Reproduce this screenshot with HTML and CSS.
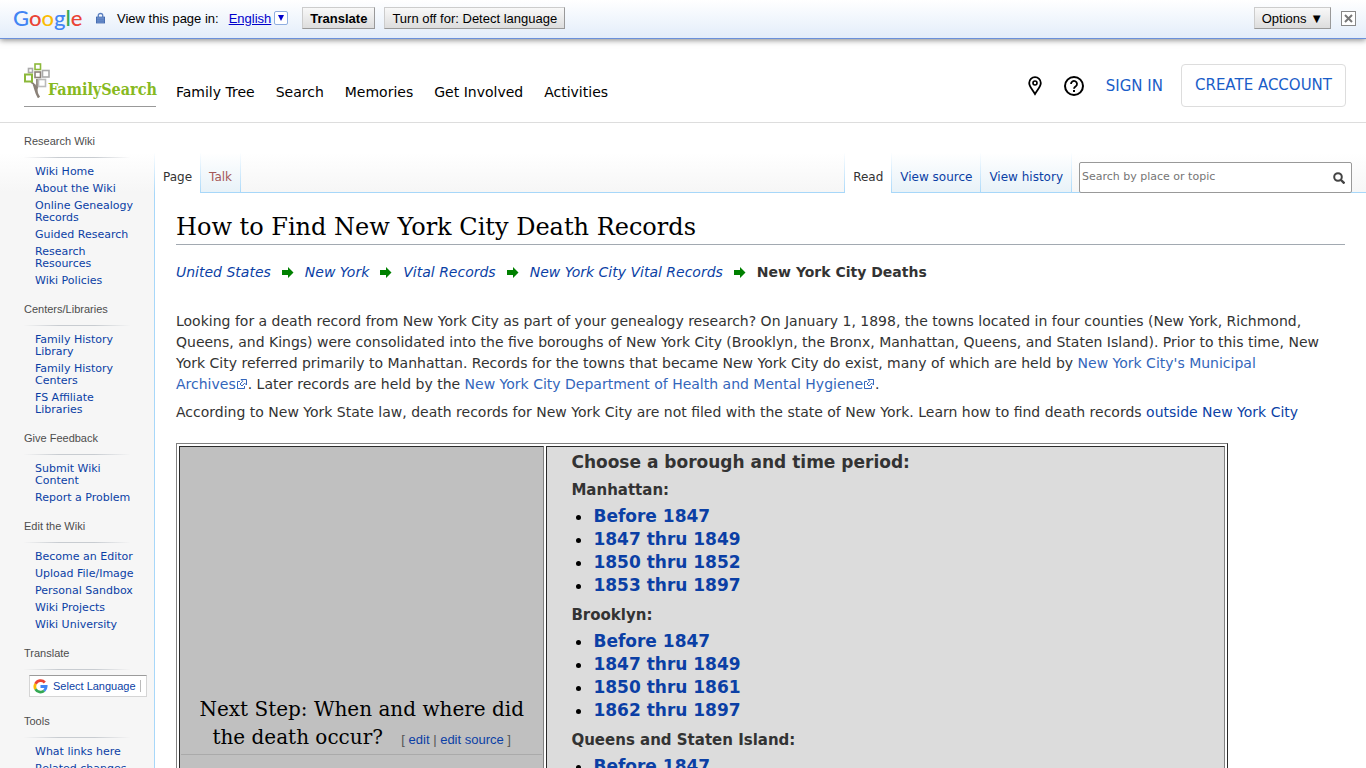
FILE: index.html
```html
<!DOCTYPE html>
<html lang="en">
<head>
    <meta charset="UTF-8">
    <meta name="viewport" content="width=device-width, initial-scale=1.0">
    <title>How to Find New York City Death Records</title>
    <link rel="stylesheet" href="styles.css">
</head>
<body>
    <!-- shared icons -->
    <svg class="defs" aria-hidden="true">
        <symbol id="arrow" viewBox="0 0 12 12">
            <path d="M0 3h6V0L11.5 5.500 6 11V8H0z" fill="#008000"/>
        </symbol>
        <symbol id="external" viewBox="0 0 12 12">
            <path d="M4 3.5H1.5v7h7V8" fill="none" stroke="#36b" stroke-width="1"/>
            <path d="M5 1.5h5.5V7L8.7 5.2 6 8 4 6l2.8-2.7z" fill="#fff" stroke="#36b" stroke-width="1"/>
        </symbol>
    </svg>

    <div class="translate-bar">
        <div class="google"><span class="g-blue">G</span><span class="g-red">o</span><span class="g-yellow">o</span><span class="g-blue">g</span><span class="g-green">l</span><span class="g-red">e</span></div>
        <svg class="lock" viewBox="0 0 10 12">
            <path d="M2.5 5V3.2a2.5 2.2 0 0 1 5 0V5" fill="none" stroke="#5a7fc0" stroke-width="1.4"/>
            <rect x="0.5" y="5" width="9" height="6.5" fill="#7d9fd8" stroke="#3f66ad"/>
            <path d="M1 7.2h8M1 9.4h8" stroke="#3f66ad"/>
        </svg>
        <span class="view-in">View this page in:</span>
        <a class="language" href="#">English</a>
        <button class="language-arrow" aria-label="Choose language"><svg viewBox="0 0 6 6"><path d="M0 0h6L3 6z" fill="#00c"/></svg></button>
        <button class="bar-button translate"><b>Translate</b></button>
        <button class="bar-button">Turn off for: Detect language</button>
        <button class="bar-button options">Options ▼</button>
        <button class="close" aria-label="Close"><svg viewBox="0 0 15 15"><rect x="0.5" y="0.5" width="14" height="14" fill="#fff" stroke="#888"/><path d="M4 4l7 7M11 4l-7 7" stroke="#777" stroke-width="2"/></svg></button>
    </div>

    <header class="header">
        <a class="logo" href="#">
            <svg viewBox="0 0 27 35">
                <g fill="none" stroke-width="1.6">
                    <path d="M15 34.500C12 30.500 11.500 25 10 21.500" stroke="#8a8178" stroke-width="2.600"/>
                    <path d="M12.500 29c0-6 2-8 4-9.500M13 25V16M7 19c3 2 5 4 5.500 8" stroke="#8a8178" stroke-width="1.800"/>
                    <rect x="11" y="1" width="5.500" height="5.500" stroke="#8cb83a"/>
                    <rect x="4.500" y="5.500" width="4" height="4" stroke="#aaa"/>
                    <rect x="11" y="9" width="5.500" height="5.500" stroke="#8a8178"/>
                    <rect x="18.500" y="7.500" width="6.500" height="6.500" stroke="#aaa"/>
                    <rect x="1" y="11.500" width="7" height="7" stroke="#8cb83a" stroke-width="2"/>
                    <rect x="14.500" y="16.500" width="7" height="7" fill="#fff" stroke="#bbb"/>
                </g>
            </svg>
            <span>FamilySearch</span>
        </a>
        <nav class="main-nav">
            <a href="#">Family Tree</a>
            <a href="#">Search</a>
            <a href="#">Memories</a>
            <a href="#">Get Involved</a>
            <a href="#">Activities</a>
        </nav>
        <div class="account">
            <a class="pin" href="#" aria-label="Locations"><svg viewBox="0 0 14 20"><path d="M7 18C4.500 13.500 1.200 10.500 1.200 6.900a5.800 5.800 0 0 1 11.600 0C12.800 10.500 9.500 13.500 7 18z" fill="none" stroke="#000" stroke-width="1.800"/><circle cx="7" cy="7" r="2" fill="none" stroke="#000" stroke-width="1.600"/></svg></a>
            <a class="help" href="#" aria-label="Help"><svg viewBox="0 0 20 20"><circle cx="10" cy="10" r="9" fill="none" stroke="#000" stroke-width="2"/><path d="M7 8a3 3 0 1 1 4.800 2.300C10.600 11.100 10 11.600 10 12.800" fill="none" stroke="#000" stroke-width="1.800"/><rect x="9" y="14" width="2" height="2"/></svg></a>
            <a class="sign-in" href="#">SIGN IN</a>
            <a class="create" href="#">CREATE ACCOUNT</a>
        </div>
    </header>

    <div class="wiki">
        <aside class="sidebar">
            <section>
                <h3>Research Wiki</h3>
                <ul>
                    <li><a href="#">Wiki Home</a></li>
                    <li><a href="#">About the Wiki</a></li>
                    <li><a href="#">Online Genealogy Records</a></li>
                    <li><a href="#">Guided Research</a></li>
                    <li><a href="#">Research Resources</a></li>
                    <li><a href="#">Wiki Policies</a></li>
                </ul>
            </section>
            <section>
                <h3>Centers/Libraries</h3>
                <ul>
                    <li><a href="#">Family History Library</a></li>
                    <li><a href="#">Family History Centers</a></li>
                    <li><a href="#">FS Affiliate Libraries</a></li>
                </ul>
            </section>
            <section>
                <h3>Give Feedback</h3>
                <ul>
                    <li><a href="#">Submit Wiki Content</a></li>
                    <li><a href="#">Report a Problem</a></li>
                </ul>
            </section>
            <section>
                <h3>Edit the Wiki</h3>
                <ul>
                    <li><a href="#">Become an Editor</a></li>
                    <li><a href="#">Upload File/Image</a></li>
                    <li><a href="#">Personal Sandbox</a></li>
                    <li><a href="#">Wiki Projects</a></li>
                    <li><a href="#">Wiki University</a></li>
                </ul>
            </section>
            <section>
                <h3>Translate</h3>
                <a class="gadget" href="#">
                    <svg viewBox="0 0 16 16" fill="none" stroke-width="3">
                        <path d="M12.600 3.700A6 6 0 0 0 2.700 5.200" stroke="#ea4335"/>
                        <path d="M2.700 5.200a6 6 0 0 0 0 5.600" stroke="#fbbc05"/>
                        <path d="M2.700 10.800a6 6 0 0 0 9.200 1.700" stroke="#34a853"/>
                        <path d="M11.900 12.500A6 6 0 0 0 14 8H8" stroke="#4285f4"/>
                    </svg>
                    <span>Select Language</span>
                </a>
            </section>
            <section>
                <h3>Tools</h3>
                <ul>
                    <li><a href="#">What links here</a></li>
                    <li><a href="#">Related changes</a></li>
                </ul>
            </section>
        </aside>

        <div class="main">
            <div class="tab-row">
                <nav class="tabs">
                    <a class="selected" href="#">Page</a>
                    <a class="new" href="#">Talk</a>
                </nav>
                <nav class="tabs views">
                    <a class="selected" href="#">Read</a>
                    <a href="#">View source</a>
                    <a href="#">View history</a>
                </nav>
                <form class="search">
                    <input type="text" placeholder="Search by place or topic" aria-label="Search by place or topic">
                    <button type="button" aria-label="Search"><svg viewBox="0 0 12 12"><circle cx="5" cy="5" r="3.800" fill="none" stroke="#444" stroke-width="2"/><path d="M8 8l3.500 3.500" stroke="#444" stroke-width="2.400"/></svg></button>
                </form>
            </div>

            <main class="content">
                <h1>How to Find New York City Death Records</h1>
                <div class="breadcrumbs">
                    <a href="#">United States</a>
                    <svg><use href="#arrow"/></svg>
                    <a href="#">New York</a>
                    <svg><use href="#arrow"/></svg>
                    <a href="#">Vital Records</a>
                    <svg><use href="#arrow"/></svg>
                    <a href="#">New York City Vital Records</a>
                    <svg><use href="#arrow"/></svg>
                    <b>New York City Deaths</b>
                </div>
                <p>Looking for a death record from New York City as part of your genealogy research? On January 1, 1898, the towns located in four counties (New York, Richmond, Queens, and Kings) were consolidated into the five boroughs of New York City (Brooklyn, the Bronx, Manhattan, Queens, and Staten Island). Prior to this time, New York City referred primarily to Manhattan. Records for the towns that became New York City do exist, many of which are held by <a class="external" href="#">New York City's Municipal <span>Archives<svg><use href="#external"/></svg></span></a>. Later records are held by the <a class="external" href="#">New York City Department of Health and Mental <span>Hygiene<svg><use href="#external"/></svg></span></a>.</p>
                <p>According to New York State law, death records for New York City are not filed with the state of New York. Learn how to find death records <a href="#">outside New York City</a></p>

                <table class="steps">
                    <tr>
                        <td class="step">
                            <h2>Next Step: When and where did the death occur? <span class="edit">[ <a href="#">edit</a> | <a href="#">edit source</a> ]</span></h2>
                        </td>
                        <td class="choices">
                            <h3>Choose a borough and time period:</h3>
                            <h4>Manhattan:</h4>
                            <ul>
                                <li><a href="#">Before 1847</a></li>
                                <li><a href="#">1847 thru 1849</a></li>
                                <li><a href="#">1850 thru 1852</a></li>
                                <li><a href="#">1853 thru 1897</a></li>
                            </ul>
                            <h4>Brooklyn:</h4>
                            <ul>
                                <li><a href="#">Before 1847</a></li>
                                <li><a href="#">1847 thru 1849</a></li>
                                <li><a href="#">1850 thru 1861</a></li>
                                <li><a href="#">1862 thru 1897</a></li>
                            </ul>
                            <h4>Queens and Staten Island:</h4>
                            <ul>
                                <li><a href="#">Before 1847</a></li>
                            </ul>
                        </td>
                    </tr>
                </table>
            </main>
        </div>
    </div>
</body>
</html>
```
FILE: styles.css
```css
body {
    margin: 0;
    height: 100vh;
    overflow: hidden;
    display: flex;
    flex-direction: column;
    font-family: "DejaVu Sans", Verdana, sans-serif;
    font-size: 14px;
    color: #333;
    background: #fff;
}

a {
    color: #0b3fa5;
    text-decoration: none;
}

h1, h2, h3, h4, ul, p {
    margin: 0;
    padding: 0;
    font-weight: normal;
}

svg {
    display: block;
}

.defs {
    position: absolute;
    width: 0;
    height: 0;
}

/* translate bar */
.translate-bar {
    display: flex;
    flex-shrink: 0;
    align-items: center;
    box-sizing: border-box;
    height: 39px;
    padding: 0 10px 2px 13px;
    font-family: "Liberation Sans", Arial, sans-serif;
    font-size: 13px;
    color: #000;
    background: linear-gradient(#fff, #e3edfa);
    border-bottom: 1px solid #6b90da;
    box-shadow: 0 1px 6px rgba(0, 0, 0, 0.5);
}

.google {
    width: 68px;
    margin-right: 15px;
    font-family: Lato, sans-serif;
    font-size: 22px;
    font-weight: 500;
    line-height: 28px;
}

.g-blue { color: #4285f4; }
.g-red { color: #ea4335; }
.g-yellow { color: #fbbc05; }
.g-green { color: #34a853; }

.lock {
    width: 9px;
    height: 12px;
    margin-right: 12px;
}

.language {
    margin: 0 3px 0 10px;
    color: #00c;
    text-decoration: underline;
}

.language-arrow {
    display: flex;
    align-items: center;
    justify-content: center;
    width: 14px;
    height: 14px;
    padding: 0;
    background: #fff;
    border: 1px solid #8faee0;
    border-radius: 2px;
}

.language-arrow svg {
    width: 6px;
    height: 6px;
}

.bar-button {
    height: 22px;
    margin-right: 9px;
    padding: 0 7px;
    font-family: inherit;
    font-size: 13px;
    color: #000;
    background: linear-gradient(#f8f8f8, #ddd);
    border: 1px solid;
    border-color: #ccc #999 #999 #ccc;
}

.translate {
    margin-left: 14px;
}

.options {
    margin-left: auto;
    margin-right: 10px;
}

.close {
    padding: 0;
    background: none;
    border: none;
}

.close svg {
    width: 15px;
    height: 15px;
}

/* site header */
.header {
    display: flex;
    flex-shrink: 0;
    align-items: center;
    box-sizing: border-box;
    height: 84px;
    padding: 0 20px 0 24px;
    border-bottom: 1px solid #ddd;
}

.logo {
    display: flex;
    align-items: flex-end;
    box-sizing: border-box;
    width: 132px;
    height: 43px;
    margin-top: 10px;
    padding-bottom: 8px;
    border-bottom: 1px solid #999;
}

.logo svg {
    flex-shrink: 0;
    width: 27px;
    height: 35px;
}

.logo span {
    margin-left: -3px;
    font-family: "DejaVu Serif Condensed", "DejaVu Serif", serif;
    font-size: 16px;
    font-weight: bold;
    line-height: 16px;
    color: #87b921;
}

.main-nav {
    display: flex;
    gap: 21px;
    margin: 22px 0 0 20px;
}

.main-nav a {
    color: #000;
}

.account {
    display: flex;
    align-items: center;
    margin: 10px 0 0 auto;
    font-size: 15px;
}

.pin svg {
    width: 14px;
    height: 20px;
}

.help svg {
    width: 20px;
    height: 20px;
    margin: 0 22px;
}

.sign-in {
    color: #1a5dc8;
}

.create {
    margin-left: 18px;
    padding: 12px 13px;
    line-height: 17px;
    color: #1a5dc8;
    border: 1px solid #ddd;
    border-radius: 4px;
}

/* wiki layout */
.wiki {
    display: flex;
    flex: 1;
    min-height: 0;
    background: linear-gradient(#fff 30px, #f6f6f6 69px);
}

.sidebar {
    flex-shrink: 0;
    box-sizing: border-box;
    width: 154px;
    padding: 10px 0 0 24px;
    font-size: 11px;
}

.sidebar section {
    margin-bottom: 9px;
}

.sidebar h3 {
    width: 106px;
    padding-bottom: 8px;
    font-family: "Liberation Sans", Arial, sans-serif;
    font-size: 11px;
    line-height: 16px;
    color: #4d4d4d;
    border-bottom: 1px solid;
    border-image: linear-gradient(to right, transparent, #c8ccd1 33%, #c8ccd1 66%, transparent) 1;
}

.sidebar ul {
    width: 102px;
    padding: 8px 0 0 11px;
    list-style: none;
}

.sidebar li {
    padding-bottom: 5px;
    line-height: 12px;
}

.gadget {
    display: flex;
    align-items: center;
    gap: 5px;
    box-sizing: border-box;
    width: 118px;
    height: 22px;
    margin: 5px 0 16px 5px;
    padding-left: 3px;
    font-family: "Liberation Sans", Arial, sans-serif;
    background: #fff;
    border: 1px solid #d5d5d5;
    border-top-color: #9b9b9b;
}

.gadget svg {
    width: 15px;
    height: 15px;
}

.gadget span {
    padding-right: 4px;
    border-right: 1px solid #bbb;
}

.main {
    display: flex;
    flex: 1;
    flex-direction: column;
    min-width: 0;
}

.tab-row {
    display: flex;
    flex-shrink: 0;
    align-items: flex-end;
    height: 70px;
    padding-right: 14px;
    background: linear-gradient(#a7d7f9, #a7d7f9) bottom / 100% 1px no-repeat;
}

.tabs {
    display: flex;
    font-size: 12px;
}

.tabs a {
    height: 23px;
    padding: 17px 8px 0;
    border-right: 1px solid;
    border-image: linear-gradient(#fff, #a7d7f9) 1;
    background: linear-gradient(#fff, #e8f2f8);
    background-size: 100% 39px;
    background-repeat: no-repeat;
}

.tabs a:first-child {
    border-left: 1px solid;
}

.tabs .selected {
    color: #333;
    background: #fff;
}

.tabs .new {
    color: #a55858;
}

.views {
    margin-left: auto;
}

.search {
    display: flex;
    align-items: center;
    box-sizing: border-box;
    width: 20%;
    min-width: 273px;
    height: 31px;
    margin-left: 7px;
    background: #fff;
    border: 1px solid #999;
    border-radius: 2px;
}

.search input {
    flex: 1;
    min-width: 0;
    padding: 0 2px 2px;
    font-family: inherit;
    font-size: 11px;
    background: none;
    border: none;
}

.search input::placeholder {
    color: #757575;
}

.search button {
    padding: 0 6px;
    background: none;
    border: none;
}

.search svg {
    width: 12px;
    height: 12px;
}

/* article */
.content {
    flex: 1;
    padding: 18px 21px 0;
    background: #fff;
    border-left: 1px solid #a7d7f9;
}

.content h1 {
    margin-bottom: 17px;
    font-family: "DejaVu Serif", serif;
    font-size: 24px;
    line-height: 33px;
    color: #000;
    border-bottom: 1px solid #a2a9b1;
}

.breadcrumbs {
    display: flex;
    align-items: center;
    gap: 11px;
    margin-bottom: 28px;
    line-height: 21px;
}

.breadcrumbs a {
    font-style: italic;
}

.breadcrumbs svg {
    width: 12px;
    height: 12px;
}

.content p {
    margin-bottom: 7px;
    padding-right: 20px;
    line-height: 21px;
}

.content .external {
    color: #36b;
}

/* keep the icon on the same line as the last word */
.external span {
    white-space: nowrap;
}

.external svg {
    display: inline-block;
    width: 12px;
    height: 12px;
    vertical-align: -1px;
}

.steps {
    width: 90%;
    margin-top: 20px;
    border: 1px solid;
    border-color: #808080 #2b2b2b #2b2b2b #808080;
    border-spacing: 2px;
}

.steps td {
    border: 1px solid;
    border-color: #2b2b2b #808080 #808080 #2b2b2b;
    vertical-align: top;
}

.step {
    width: 35%;
    padding: 248px 1px 24px;
    text-align: center;
    background: #c0c0c0;
}

.step h2 {
    padding: 0 12px;
    font-family: "DejaVu Serif", serif;
    font-size: 20px;
    line-height: 28px;
    color: #000;
    border-bottom: 1px solid #aaa;
}

.edit {
    margin-left: 12px;
    font-family: "Liberation Sans", Arial, sans-serif;
    font-size: 13px;
    color: #555;
}

.choices {
    padding: 4px 24px;
    background: #dcdcdc;
}

.choices h3 {
    margin-bottom: 6px;
    font-size: 17px;
    font-weight: bold;
    line-height: 23px;
}

.choices h4 {
    margin-bottom: 4px;
    font-size: 15px;
    font-weight: bold;
    line-height: 21px;
}

.choices ul {
    margin-bottom: 8px;
    padding-left: 22px;
    color: #000;
}

.choices li {
    font-size: 17px;
    font-weight: bold;
    line-height: 23px;
}
```
